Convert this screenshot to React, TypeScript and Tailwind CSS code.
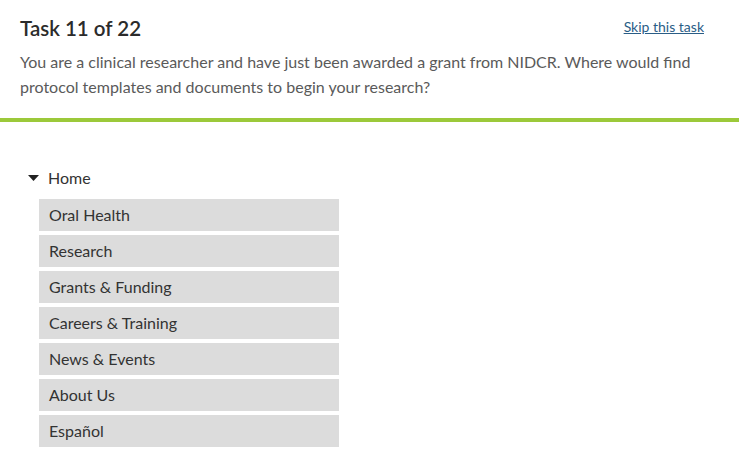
const items = ["Oral Health", "Research", "Grants & Funding", "Careers & Training", "News & Events", "About Us", "Español"];

export default function App() {
    return (
        <div className="w-[739px] h-[464px] bg-white font-['Lato','Open_Sans',sans-serif] text-[#333]">
            <div className="px-5 pt-[15px] pb-[19px] border-b-4 border-[#9cc93a]">
                <div className="flex justify-between items-start">
                    <h1 className="text-[20.5px] leading-[26px] font-semibold text-[#2b2b2b]">Task 11 of 22</h1>
                    <a href="#" className="mt-[3px] mr-[15px] text-[14px] leading-[18px] text-[#2a5d86] underline">Skip this task</a>
                </div>
                <p className="mt-[8px] text-[16px] leading-[25px] text-[#5a5a5a]">
                    You are a clinical researcher and have just been awarded a grant from NIDCR. Where would find protocol templates and documents to begin your research?
                </p>
            </div>
            <div className="pt-[45px] pl-[28px]">
                <div className="flex items-center gap-[9px] h-[22px]">
                    <svg width="11" height="6" viewBox="0 0 11 6"><path d="M0 0h11L5.5 6z" fill="#222" /></svg>
                    <span className="text-[16px] text-[#333]">Home</span>
                </div>
                <ul className="mt-[10px] ml-[11px] flex flex-col gap-[4px]">
                    {items.map((it) => (
                        <li key={it} className="w-[300px] h-[32px] bg-[#dcdcdc] pl-[10px] flex items-center text-[16px] text-[#333]">{it}</li>
                    ))}
                </ul>
            </div>
        </div>
    );
}
